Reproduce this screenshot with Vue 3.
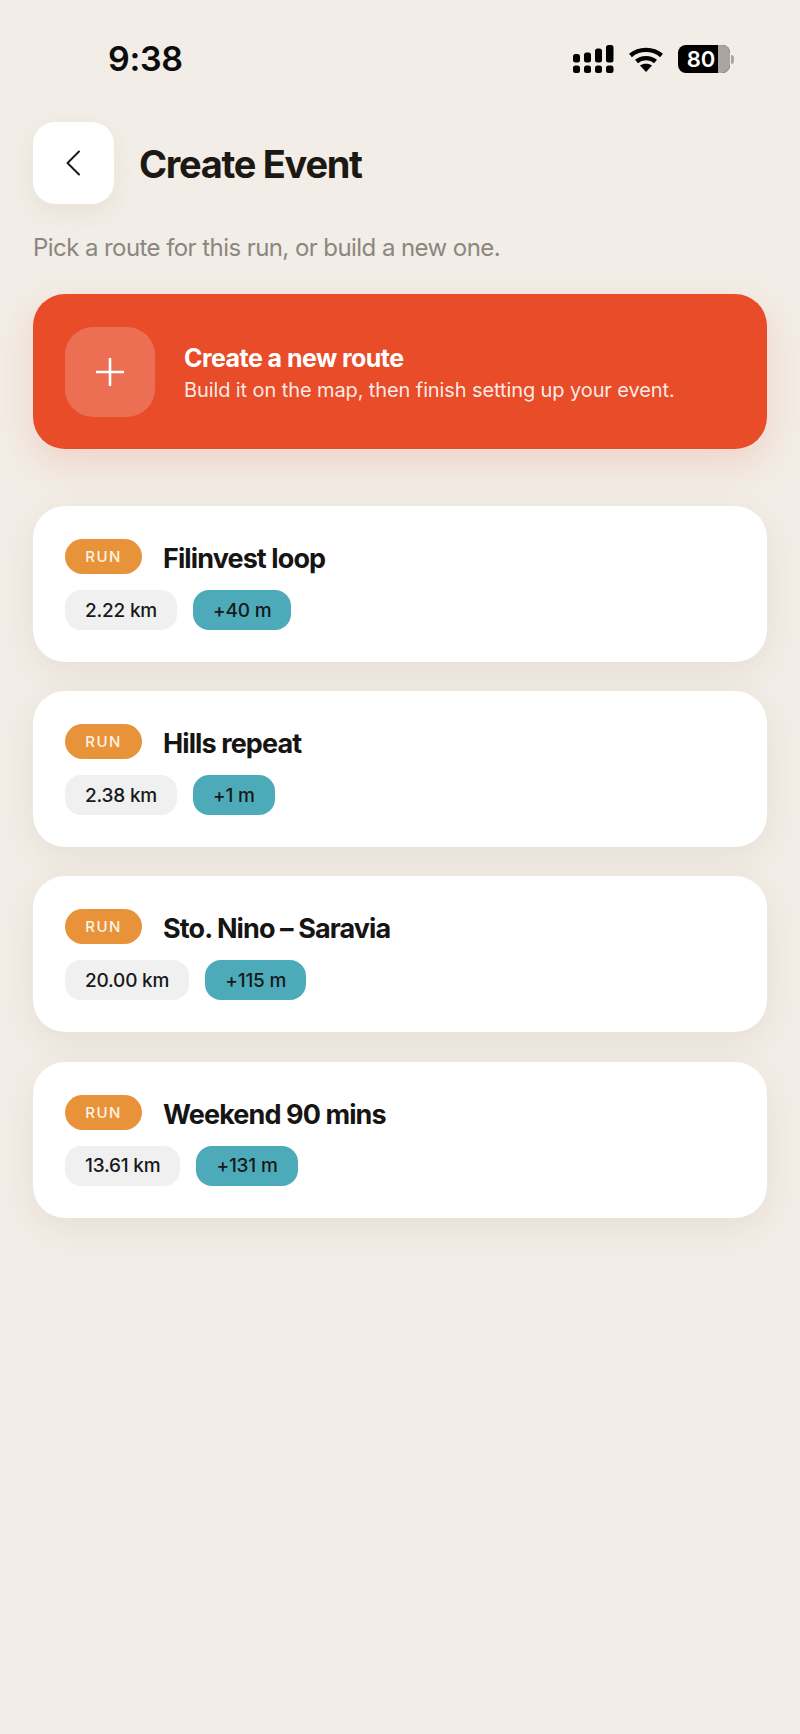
<script setup>
const routes = [
  { name: "Filinvest loop", distance: "2.22 km", climb: "+40 m" },
  { name: "Hills repeat", distance: "2.38 km", climb: "+1 m" },
  { name: "Sto. Nino – Saravia", distance: "20.00 km", climb: "+115 m" },
  { name: "Weekend 90 mins", distance: "13.61 km", climb: "+131 m" },
];
</script>

<template>
  <div class="screen">
    <div class="status-bar">
      <span class="time">9:38</span>
      <div class="status-icons">
        <svg class="signal" width="42" height="28" viewBox="0 0 42 28" fill="#000">
          <rect x="0" y="9" width="7" height="8.500" rx="2.500" />
          <rect x="11" y="7.500" width="7" height="10" rx="2.500" />
          <rect x="22" y="3.500" width="7" height="14" rx="2.500" />
          <rect x="33" y="0" width="7.500" height="17.500" rx="2.500" />
          <rect x="0" y="20.500" width="7" height="7.500" rx="2.500" />
          <rect x="11" y="20.500" width="7" height="7.500" rx="2.500" />
          <rect x="22" y="20.500" width="7" height="7.500" rx="2.500" />
          <rect x="33" y="20.500" width="7.500" height="7.500" rx="2.500" />
        </svg>
        <svg class="wifi" width="36" height="26" viewBox="0 0 36 26" fill="none" stroke="#000" stroke-width="4.400">
          <path d="M2.500 9.500C11 2 25 2 33.500 9.500" />
          <path d="M8.500 15.500C13.500 11 22.500 11 27.500 15.500" />
          <path d="M18 26l-6-6.500c3.400-2.500 8.600-2.500 12 0z" fill="#000" stroke="none" />
        </svg>
        <div class="battery">
          <div class="battery-body">
            <span class="battery-level">80</span>
            <span class="battery-rest"></span>
          </div>
          <span class="battery-nub"></span>
        </div>
      </div>
    </div>

    <header class="header">
      <button class="back-btn">
        <svg width="18" height="26" viewBox="0 0 18 26" fill="none" stroke="#1c1814" stroke-width="2" stroke-linecap="round" stroke-linejoin="round">
          <path d="M14 1.500L2.500 13 14 24.500" />
        </svg>
      </button>
      <h1 class="title">Create Event</h1>
    </header>

    <p class="intro">Pick a route for this run, or build a new one.</p>

    <div class="new-route">
      <div class="plus-box">
        <svg width="28" height="28" viewBox="0 0 28 28" stroke="#fff" stroke-width="2.600" stroke-linecap="round">
          <path d="M14 1v26M1 14h26" />
        </svg>
      </div>
      <div class="new-route-text">
        <div class="new-route-title">Create a new route</div>
        <div class="new-route-sub">Build it on the map, then finish setting up your event.</div>
      </div>
    </div>

    <div class="route-list">
      <div v-for="route in routes" :key="route.name" class="route-card">
        <div class="route-top">
          <span class="tag">RUN</span>
          <span class="route-name">{{ route.name }}</span>
        </div>
        <div class="route-stats">
          <span class="chip">{{ route.distance }}</span>
          <span class="chip climb">{{ route.climb }}</span>
        </div>
      </div>
    </div>
  </div>
</template>

<style>
body {
  background: #f2ede6;
}
</style>

<style scoped>
.screen {
  width: 800px;
  height: 1734px;
  box-sizing: border-box;
  padding: 0 33px;
  background: #f2ede6;
  font-family: Inter, "Liberation Sans", sans-serif;
  overflow: hidden;
}

.status-bar {
  height: 122px;
  display: flex;
  align-items: flex-start;
  justify-content: space-between;
  padding: 38px 33px 0 75px;
  box-sizing: border-box;
}

.time {
  font-size: 34px;
  line-height: 42px;
  font-weight: 600;
  letter-spacing: -0.300px;
  color: #0c0c0c;
}

.status-icons {
  display: flex;
  align-items: center;
  gap: 14px;
  margin-top: 7px;
}

.signal {
  margin-right: -1px;
}

.battery {
  display: flex;
  align-items: center;
  gap: 1px;
}

.battery-body {
  width: 52px;
  height: 28px;
  border-radius: 8px;
  background: #000;
  display: flex;
  overflow: hidden;
}

.battery-level {
  flex: 1;
  padding-left: 6px;
  color: #fff;
  font-size: 22px;
  font-weight: 600;
  line-height: 28px;
  text-align: center;
}

.battery-rest {
  width: 12px;
  background: #aaa59f;
}

.battery-nub {
  width: 3px;
  height: 9px;
  border-radius: 0 3px 3px 0;
  background: #aaa59f;
}

.header {
  display: flex;
  align-items: center;
  gap: 25px;
}

.back-btn {
  width: 81px;
  height: 82px;
  border: none;
  border-radius: 22px;
  background: #fff;
  display: flex;
  align-items: center;
  justify-content: center;
  padding: 0;
  box-shadow: 0 8px 24px rgba(90, 70, 40, 0.07);
}

.title {
  margin: 2px 0 0;
  font-size: 38px;
  font-weight: 700;
  letter-spacing: -1.300px;
  color: #1c1814;
}

.intro {
  margin: 28px 0 0;
  font-size: 24px;
  line-height: 32px;
  letter-spacing: -0.570px;
  color: #8b8680;
}

.new-route {
  margin-top: 30px;
  height: 155px;
  border-radius: 32px;
  background: #e84c29;
  display: flex;
  align-items: center;
  gap: 29px;
  padding: 0 32px;
  box-shadow: 0 14px 36px rgba(233, 76, 41, 0.16);
}

.plus-box {
  width: 90px;
  height: 90px;
  border-radius: 28px;
  background: rgba(255, 255, 255, 0.2);
  display: flex;
  align-items: center;
  justify-content: center;
}

.new-route-text {
  padding-top: 3px;
}

.new-route-title {
  font-size: 25px;
  line-height: 32px;
  font-weight: 700;
  letter-spacing: -0.550px;
  color: #fff;
}

.new-route-sub {
  margin-top: 2px;
  font-size: 20px;
  line-height: 28px;
  letter-spacing: -0.100px;
  color: rgba(255, 255, 255, 0.9);
}

.route-list {
  margin-top: 57px;
  display: flex;
  flex-direction: column;
  gap: 29.200px;
}

.route-card {
  height: 156px;
  box-sizing: border-box;
  padding: 32px 32px 0;
  border-radius: 32px;
  background: #fff;
  box-shadow: 0 10px 36px rgba(90, 70, 40, 0.08);
}

.route-top {
  display: flex;
  align-items: center;
  gap: 21px;
}

.tag {
  width: 77px;
  height: 35px;
  border-radius: 18px;
  background: #e8933a;
  color: #fdf3e6;
  font-size: 15px;
  font-weight: 500;
  letter-spacing: 1.500px;
  display: flex;
  align-items: center;
  justify-content: center;
}

.route-name {
  padding-top: 4px;
  font-size: 27px;
  line-height: 33px;
  font-weight: 700;
  letter-spacing: -0.900px;
  color: #161514;
}

.route-stats {
  margin-top: 15px;
  display: flex;
  gap: 16px;
}

.chip {
  height: 40px;
  padding: 0 20px;
  border-radius: 16px;
  background: #f0f0f0;
  color: #17181a;
  font-size: 19px;
  font-weight: 500;
  letter-spacing: -0.200px;
  display: flex;
  align-items: center;
}

.climb {
  background: #4dabb9;
}
</style>
